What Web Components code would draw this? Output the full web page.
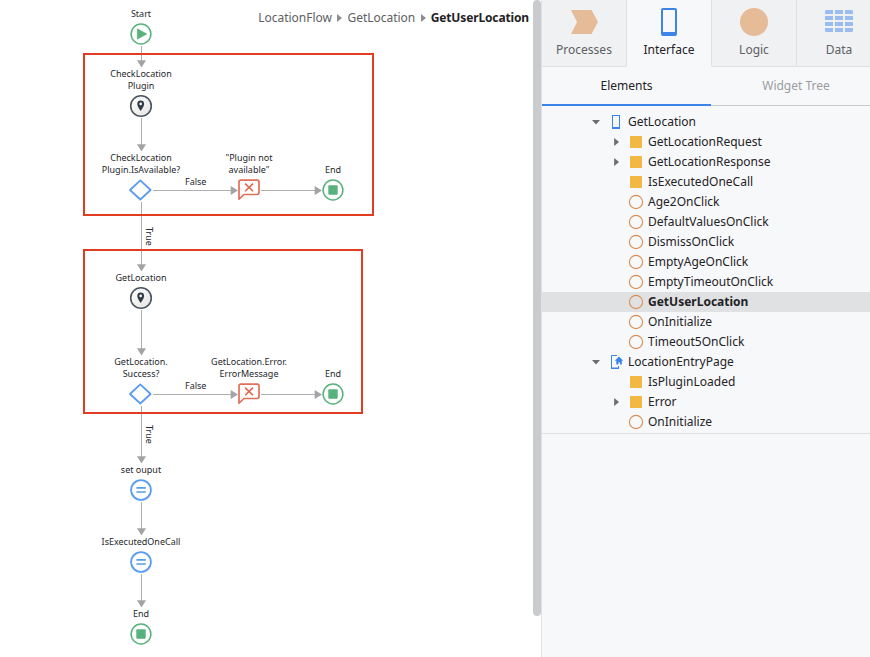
<!DOCTYPE html>
<html lang="en">
<head>
<meta charset="utf-8">
<title>GetUserLocation</title>
<style>
html,body{margin:0;height:100%;overflow:hidden;background:#fff}
body{font-family:"Noto Sans","Open Sans",sans-serif;color:#1f2226}
</style>
</head>
<body>
<studio-app></studio-app>
<script>
const ICONS = {
  start: '<circle cx="12" cy="12" r="9.9" fill="#fff" stroke="#58b27c" stroke-width="1.5"/><path d="M8.3 6.8 17.8 12 8.3 17.2Z" fill="#58b27c" stroke="#58b27c" stroke-linejoin="round" stroke-width=".6"/>',
  end: '<circle cx="12" cy="12" r="9.9" fill="#fff" stroke="#58b27c" stroke-width="1.5"/><rect x="7.3" y="7.3" width="9.4" height="9.4" rx="1" fill="#58b27c"/>',
  assign: '<circle cx="12" cy="12" r="9.9" fill="#fff" stroke="#5a9cf0" stroke-width="1.8"/><path d="M7.4 9.8H16.8M7.4 14H16.8" stroke="#5a9cf0" stroke-width="1.7"/>',
  plugin: '<defs><linearGradient id="g" x2="1" y2="1"><stop offset="0" stop-color="#fff"/><stop offset="1" stop-color="#e4e4e4"/></linearGradient></defs><circle cx="12" cy="12" r="10.3" fill="url(#g)" stroke="#4a545e" stroke-width="1.6"/><path fill-rule="evenodd" d="M11.7 6.6A3.4 3.4 0 0 0 8.3 10C8.3 12.5 11.7 16.9 11.7 16.9S15.1 12.5 15.1 10A3.4 3.4 0 0 0 11.7 6.6ZM11.7 8.6A1.35 1.35 0 1 1 11.7 11.3 1.35 1.35 0 0 1 11.7 8.6Z" fill="#303b45"/>',
  cond: '<path d="M11.3 2.4 21.6 12 11.3 21.5 1 12Z" fill="#fff" stroke="#5a9cf0" stroke-width="1.8" stroke-linejoin="round"/>',
  error: '<path d="M3.7 2.2H20.2Q22 2.2 22 4V14.6Q22 16.5 20.2 16.5H7L2 21.2V4Q2 2.2 3.7 2.2Z" fill="#fff" stroke="#e0705a" stroke-width="1.7" stroke-linejoin="round"/><path d="M8.1 5.6 16 13.3M16 5.6 8.1 13.3" stroke="#e0664f" stroke-width="1.6"/>'
};

customElements.define('flow-node', class extends HTMLElement {
  connectedCallback() {
    const x = this.getAttribute('x'), y = this.getAttribute('y');
    this.attachShadow({mode:'open'}).innerHTML = `<style>
      :host{position:absolute;left:${x}px;top:${y}px;width:120px;margin-left:-60px;transform:translateY(-100%);display:flex;flex-direction:column;align-items:center}
      .label{font-size:9px;line-height:12px;text-align:center;white-space:pre;color:#25282c}
      svg{width:24px;height:24px;display:block;margin-top:2px}
    </style><div class="label"><slot></slot></div><svg viewBox="0 0 24 24" fill="none">${ICONS[this.getAttribute('kind')]}</svg>`;
  }
});

customElements.define('flow-edge', class extends HTMLElement {
  connectedCallback() {
    const a = n => +this.getAttribute(n), len = a('len'), down = this.hasAttribute('down');
    const w = down ? 10 : len, h = down ? len : 10;
    const d = down
      ? `<path d="M5.5 0V${len-6}" stroke="#aeafb2"/><path d="M1 ${len-7.3}H10L5.5 ${len}Z" fill="#a3a4a7"/>`
      : `<path d="M0 5.5H${len-6}" stroke="#aeafb2"/><path d="M${len-7.3} 1V10L${len} 5.5Z" fill="#a3a4a7"/>`;
    this.attachShadow({mode:'open'}).innerHTML = `<style>
      :host{position:absolute;left:${a('x') - (down ? 5 : 0)}px;top:${a('y') - (down ? 0 : 5)}px;width:${w}px;height:${h}px}
      svg{display:block}
      span{position:absolute;font-size:9px;line-height:12px;white-space:nowrap;color:#25282c;
        ${down ? `left:7px;top:${a('at')}px;writing-mode:vertical-rl` : `left:32px;top:-9px`}}
    </style><svg width="${w}" height="${h}">${d}</svg><span><slot></slot></span>`;
  }
});

customElements.define('flow-frame', class extends HTMLElement {
  connectedCallback() {
    const a = n => this.getAttribute(n);
    this.attachShadow({mode:'open'}).innerHTML = `<style>
      :host{position:absolute;box-sizing:border-box;border:2px solid #e23d22;left:${a('x')}px;top:${a('y')}px;width:${a('w')}px;height:${a('h')}px}
    </style>`;
  }
});

customElements.define('bread-crumbs', class extends HTMLElement {
  connectedCallback() {
    const parts = this.getAttribute('path').split('/');
    const sep = '<svg width="5" height="8"><path d="M0 0 5 4 0 8Z" fill="#8b8d91"/></svg>';
    this.attachShadow({mode:'open'}).innerHTML = `<style>
      :host{display:flex;justify-content:flex-end;align-items:center;gap:5px;height:34px;padding-right:4px;font-size:12px;color:#5d6064}
      svg{margin:2px 0 0 .5px}
      span{letter-spacing:-.02px}
      b{color:#1f2226;font-weight:700;letter-spacing:-.14px}
    </style>` + parts.map((p,i) => i === parts.length-1 ? `<b>${p}</b>` : `<span>${p}</span>${sep}`).join('');
  }
});

customElements.define('flow-canvas', class extends HTMLElement {
  connectedCallback() {
    this.attachShadow({mode:'open'}).innerHTML = `<style>
      :host{display:block;position:relative;height:657px;overflow:hidden;background:#fff}
    </style>
    <bread-crumbs path="LocationFlow/GetLocation/GetUserLocation"></bread-crumbs>
    <flow-edge down x="141" y="46" len="21.5"></flow-edge>
    <flow-edge down x="141" y="118" len="33.5"></flow-edge>
    <flow-edge down x="141" y="202" len="69.5" at="25">True</flow-edge>
    <flow-edge down x="141" y="310" len="45.5"></flow-edge>
    <flow-edge down x="141" y="406" len="57.5" at="19">True</flow-edge>
    <flow-edge down x="141" y="502" len="33.5"></flow-edge>
    <flow-edge down x="141" y="574" len="33.5"></flow-edge>
    <flow-edge x="153" y="190" len="85">False</flow-edge>
    <flow-edge x="261" y="190" len="61"></flow-edge>
    <flow-edge x="153" y="394" len="85">False</flow-edge>
    <flow-edge x="261" y="394" len="61"></flow-edge>
    <flow-node kind="start" x="141" y="46">Start</flow-node>
    <flow-node kind="plugin" x="141" y="118">CheckLocation\nPlugin</flow-node>
    <flow-node kind="cond" x="141" y="202">CheckLocation\nPlugin.IsAvailable?</flow-node>
    <flow-node kind="error" x="249" y="202">"Plugin not\navailable"</flow-node>
    <flow-node kind="end" x="333" y="202">End</flow-node>
    <flow-node kind="plugin" x="141" y="310">GetLocation</flow-node>
    <flow-node kind="cond" x="141" y="406">GetLocation.\nSuccess?</flow-node>
    <flow-node kind="error" x="249" y="406">GetLocation.Error.\nErrorMessage</flow-node>
    <flow-node kind="end" x="333" y="406">End</flow-node>
    <flow-node kind="assign" x="141" y="502">set ouput</flow-node>
    <flow-node kind="assign" x="141" y="574">IsExecutedOneCall</flow-node>
    <flow-node kind="end" x="141" y="646">End</flow-node>
    <flow-frame x="83" y="53" w="291" h="163"></flow-frame>
    <flow-frame x="83" y="249" w="280" h="165"></flow-frame>`;
  }
});

customElements.define('scroll-track', class extends HTMLElement {
  connectedCallback() {
    this.attachShadow({mode:'open'}).innerHTML = `<style>
      :host{display:block;background:#fff}
      div{height:616px;border-radius:4px;background:#cacbcf}
    </style><div></div>`;
  }
});

const TAB_ICONS = {
  Processes: '<path d="M3 4H23.5L30 16 23.5 28H3L9 16Z" fill="#e6bb98"/>',
  Interface: '<path fill-rule="evenodd" d="M10 2H22Q24 2 24 4V28Q24 30 22 30H10Q8 30 8 28V4Q8 2 10 2ZM10 4V26H22V4Z" fill="#3c84e8"/>',
  Logic: '<circle cx="16" cy="16" r="14" fill="#e6bb98"/>',
  Data: '<clipPath id="c"><rect x="2" y="4" width="28" height="22" rx="1.5"/></clipPath><path clip-path="url(#c)" d="M2 6H30M2 12H30M2 18H30M2 24H30" stroke="#9bbcf0" stroke-width="4" stroke-dasharray="8 2"/>'
};
customElements.define('layer-tab', class extends HTMLElement {
  connectedCallback() {
    this.attachShadow({mode:'open'}).innerHTML = `<style>
      :host{box-sizing:border-box;flex:0 0 85px;height:67px;display:flex;flex-direction:column;align-items:center;padding-top:6px;background:#f0f1f3;border-right:1px solid #dfe0e3;border-bottom:1px solid #dfe0e3;color:#5d6064;font-size:12px;line-height:16px}
      :host([active]){background:#f7f8fa;border-bottom-color:transparent;color:#1f2226}
      svg{width:32px;height:32px;margin-bottom:4px}
    </style><svg viewBox="0 0 32 32">${TAB_ICONS[this.textContent]}</svg><slot></slot>`;
  }
});

customElements.define('sub-tab', class extends HTMLElement {
  connectedCallback() {
    this.attachShadow({mode:'open'}).innerHTML = `<style>
      :host{box-sizing:border-box;flex:0 0 170px;height:39px;line-height:37px;text-align:center;font-size:12px;color:#9a9da1;border-bottom:1px solid #c9cace}
      :host([active]){flex-basis:169px;color:#1f2226;border-bottom:2px solid #3c84e8}
    </style><slot></slot>`;
  }
});

const TREE_ICONS = {
  screen: '<path fill-rule="evenodd" d="M4 1H12V15H4ZM5 2V13H11V2Z" fill="#3c84e8"/>',
  home: '<path d="M9 1.5H3.5V14.5H10.5V12" fill="none" stroke="#3c84e8"/><path d="M3 13.5H11V15H3Z" fill="#3c84e8"/><path d="M11 2.4 15.2 6.8H13.8V10.6H12V8.4H10.4V10.6H8.3V6.8H6.8Z" fill="#3c84e8"/>',
  data: '<rect x="2" y="2" width="12" height="12" rx=".5" fill="#f3b744"/>',
  action: '<circle cx="8" cy="8" r="6.6" fill="none" stroke="#dc8e52" stroke-width="1.1"/>'
};
customElements.define('tree-row', class extends HTMLElement {
  connectedCallback() {
    const lvl = +this.getAttribute('level'), st = this.getAttribute('state');
    const arrow = st === 'open' ? '<path d="M0 3H8L4 7.5Z" fill="#6b6d71"/>' : st === 'closed' ? '<path d="M2.2 1V9L7 5Z" fill="#6b6d71"/>' : '';
    this.attachShadow({mode:'open'}).innerHTML = `<style>
      :host{display:flex;align-items:center;height:20px;padding-left:${50 + lvl*20}px;font-size:12px;white-space:nowrap}
      :host([selected]){background:#e0e1e2;font-weight:700}
      .arrow{width:8px;height:11px;margin-right:8px}
      .icon{width:16px;height:16px;margin-right:4px}
      span{padding-bottom:2px}
    </style><svg class="arrow">${arrow}</svg><svg class="icon" viewBox="0 0 16 16">${TREE_ICONS[this.getAttribute('icon')]}</svg><span><slot></slot></span>`;
  }
});

customElements.define('side-panel', class extends HTMLElement {
  connectedCallback() {
    const rows = [
      [0,'screen','GetLocation','open'],[1,'data','GetLocationRequest','closed'],[1,'data','GetLocationResponse','closed'],
      [1,'data','IsExecutedOneCall'],[1,'action','Age2OnClick'],[1,'action','DefaultValuesOnClick'],[1,'action','DismissOnClick'],
      [1,'action','EmptyAgeOnClick'],[1,'action','EmptyTimeoutOnClick'],[1,'action','GetUserLocation','','selected'],
      [1,'action','OnInitialize'],[1,'action','Timeout5OnClick'],[0,'home','LocationEntryPage','open'],
      [1,'data','IsPluginLoaded'],[1,'data','Error','closed'],[1,'action','OnInitialize']
    ];
    this.attachShadow({mode:'open'}).innerHTML = `<style>
      :host{display:block;background:#f7f8fa;border-left:1px solid #dfe0e3;overflow:hidden}
      nav{display:flex}
      .tree{padding:6px 0 1px;border-bottom:1px solid #dfe0e3}
    </style>
    <nav><layer-tab>Processes</layer-tab><layer-tab active>Interface</layer-tab><layer-tab>Logic</layer-tab><layer-tab>Data</layer-tab></nav>
    <nav><sub-tab active>Elements</sub-tab><sub-tab>Widget Tree</sub-tab></nav>
    <div class="tree">${rows.map(([l,i,t,s='',sel='']) => `<tree-row level="${l}" icon="${i}" state="${s}" ${sel}>${t}</tree-row>`).join('')}</div>`;
  }
});

customElements.define('studio-app', class extends HTMLElement {
  connectedCallback() {
    this.attachShadow({mode:'open'}).innerHTML = `<style>
      :host{display:grid;grid-template-columns:533px 8px 329px;width:870px;height:657px;overflow:hidden}
    </style><flow-canvas></flow-canvas><scroll-track></scroll-track><side-panel></side-panel>`;
  }
});
</script>
</body>
</html>
